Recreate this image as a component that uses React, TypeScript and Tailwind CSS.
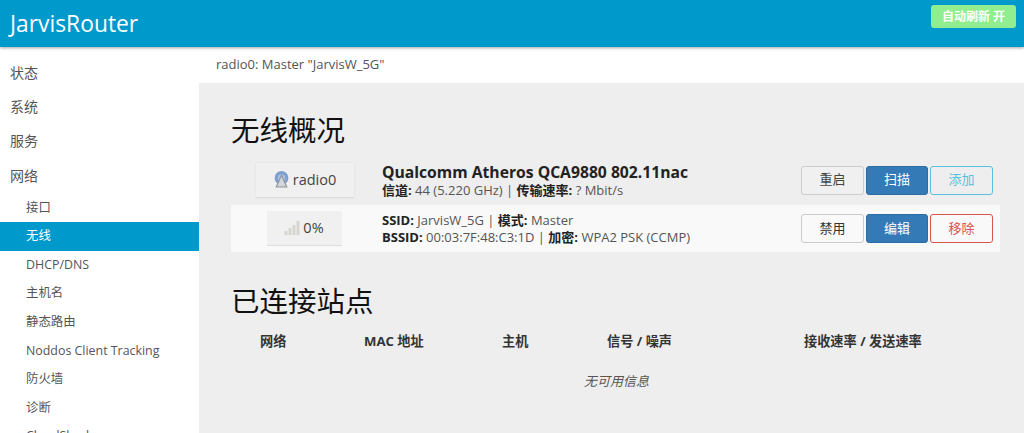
import React from 'react';

const font = { fontFamily: '"Open Sans", "Noto Sans CJK SC", sans-serif' };

const topItems = ['状态', '系统', '服务', '网络'];
const subItems = ['接口', '无线', 'DHCP/DNS', '主机名', '静态路由', 'Noddos Client Tracking', '防火墙', '诊断', 'CloudShark'];

function Btn({ label, kind }: { label: string; kind: 'plain' | 'dim' | 'blue' | 'info' | 'red' }) {
  const styles = {
    plain: 'w-[63px] border-[#ccc] text-[#333] bg-transparent',
    dim: 'w-[63px] border-[#ccc] text-[#444] bg-[#f0f0f0]',
    blue: 'w-[62px] border-[#2e6da4] text-white bg-[#337ab7]',
    info: 'w-[63px] border-[#5bc0de] text-[#5bc0de] bg-transparent',
    red: 'w-[63px] border-[#d9534f] text-[#d9534f] bg-transparent',
  };
  return (
    <div className={`h-[29px] flex items-center justify-center rounded-[3px] border text-[13px] ${styles[kind]}`}>
      {label}
    </div>
  );
}

function RadioIcon() {
  return (
    <svg width="17" height="17" viewBox="0 0 16 16">
      <circle cx="8" cy="6.5" r="6.5" fill="#7f9fd0" />
      <circle cx="8" cy="6.5" r="3.5" fill="#a9c0e4" />
      <path d="M8 4 L3 15 H13 Z" fill="#d3d5d8" stroke="#8d939b" strokeWidth="1" />
    </svg>
  );
}

function SignalIcon() {
  return (
    <svg width="16" height="14" viewBox="0 0 16 14">
      <rect x="0.5" y="10" width="3" height="4" fill="#d6d6d0" />
      <rect x="4.5" y="7" width="3" height="7" fill="#d6d6d0" />
      <rect x="8.5" y="4" width="3" height="10" fill="#d6d6d0" />
      <rect x="12.5" y="0" width="3" height="14" fill="#d6d6d0" />
    </svg>
  );
}

export default function App() {
  return (
    <div className="h-[433px] w-[1024px] overflow-hidden bg-white text-[#555]" style={font}>
      <header className="relative z-10 h-[47px] bg-[#0099cc] shadow-[0_1px_3px_rgba(0,0,0,0.35)] flex items-start justify-between pl-[10px] pr-[8px]">
        <div className="text-[22.8px] leading-[47px] text-white">JarvisRouter</div>
        <div className="mt-[5px] h-[23px] w-[85px] rounded-[3px] bg-[#90ee90] text-white font-bold text-[12px] flex items-center justify-center">
          自动刷新 开
        </div>
      </header>

      <div className="flex h-[386px]">
        <aside className="w-[199px] shrink-0 pt-[8px] text-[14px]">
          {topItems.map((t) => (
            <div key={t} className="h-[34.4px] pl-[10px] flex items-center">{t}</div>
          ))}
          <div className="pt-[1px]">
            {subItems.map((t) => (
              <div
                key={t}
                className={`h-[28.6px] pl-[26px] flex items-center text-[12.4px] ${t === '无线' ? 'bg-[#0099cc] text-white' : ''}`}
              >
                {t}
              </div>
            ))}
          </div>
        </aside>

        <main className="flex-1 min-w-0">
          <div className="h-[36px] pl-[17px] flex items-center text-[13px]">radio0: Master "JarvisW_5G"</div>
          <div className="h-[350px] bg-[#eeeeee] pl-[32px] pr-[24px] pt-[26px]">
            <h2 className="text-[28.5px] leading-[42px] text-[#111]">无线概况</h2>

            <div className="mt-[8px] h-[42px] flex items-center">
              <div className="w-[134px] flex justify-center pl-[13px]">
                <div className="w-[98px] h-[35px] bg-[#f0f0f0] border-b border-[#ddd] shadow-[0_0_2px_rgba(0,0,0,0.08)] flex items-center justify-center gap-[3px] text-[14.5px] text-[#444]">
                  <RadioIcon />
                  radio0
                </div>
              </div>
              <div className="pl-[17px] flex-1 min-w-0">
                <div className="font-bold text-[15.7px] leading-[19px] text-[#222]">Qualcomm Atheros QCA9880 802.11nac</div>
                <div className="text-[13px] leading-[16px] text-[#555]">
                  <b className="text-[#222]">信道:</b> 44 (5.220 GHz) | <b className="text-[#222]">传输速率:</b> ? Mbit/s
                </div>
              </div>
              <div className="flex gap-[2px] pr-[7px]">
                <Btn label="重启" kind="dim" />
                <Btn label="扫描" kind="blue" />
                <Btn label="添加" kind="info" />
              </div>
            </div>

            <div className="mt-[4px] h-[47px] bg-[#f9f9f9] flex items-center">
              <div className="w-[134px] flex justify-center pl-[12px]">
                <div className="w-[75px] h-[35px] bg-[#f0f0f0] border-b border-[#ddd] flex items-center justify-center gap-[3px] text-[14.5px] text-[#444]">
                  <SignalIcon />
                  0%
                </div>
              </div>
              <div className="pl-[17px] flex-1 min-w-0 text-[13px] leading-[17px]">
                <div>
                  <b className="text-[#222]">SSID:</b> JarvisW_5G | <b className="text-[#222]">模式:</b> Master
                </div>
                <div>
                  <b className="text-[#222]">BSSID:</b> 00:03:7F:48:C3:1D | <b className="text-[#222]">加密:</b> WPA2 PSK (CCMP)
                </div>
              </div>
              <div className="flex gap-[2px] pr-[7px]">
                <Btn label="禁用" kind="plain" />
                <Btn label="编辑" kind="blue" />
                <Btn label="移除" kind="red" />
              </div>
            </div>

            <h2 className="mt-[28px] text-[28.5px] leading-[42px] text-[#111]">已连接站点</h2>

            <div className="mt-[10px] h-[20px] flex items-center text-[13.2px] font-bold text-[#333]">
              <div className="w-[97px] pl-[29px]">网络</div>
              <div className="w-[137px] pl-[36px]">MAC 地址</div>
              <div className="w-[105px] pl-[37px]">主机</div>
              <div className="w-[197px] pl-[37px]">信号 / 噪声</div>
              <div className="pl-[37px]">接收速率 / 发送速率</div>
            </div>
            <div className="mt-[19px] pl-[353px] text-[13px] italic leading-[20px]">无可用信息</div>
          </div>
        </main>
      </div>
    </div>
  );
}
